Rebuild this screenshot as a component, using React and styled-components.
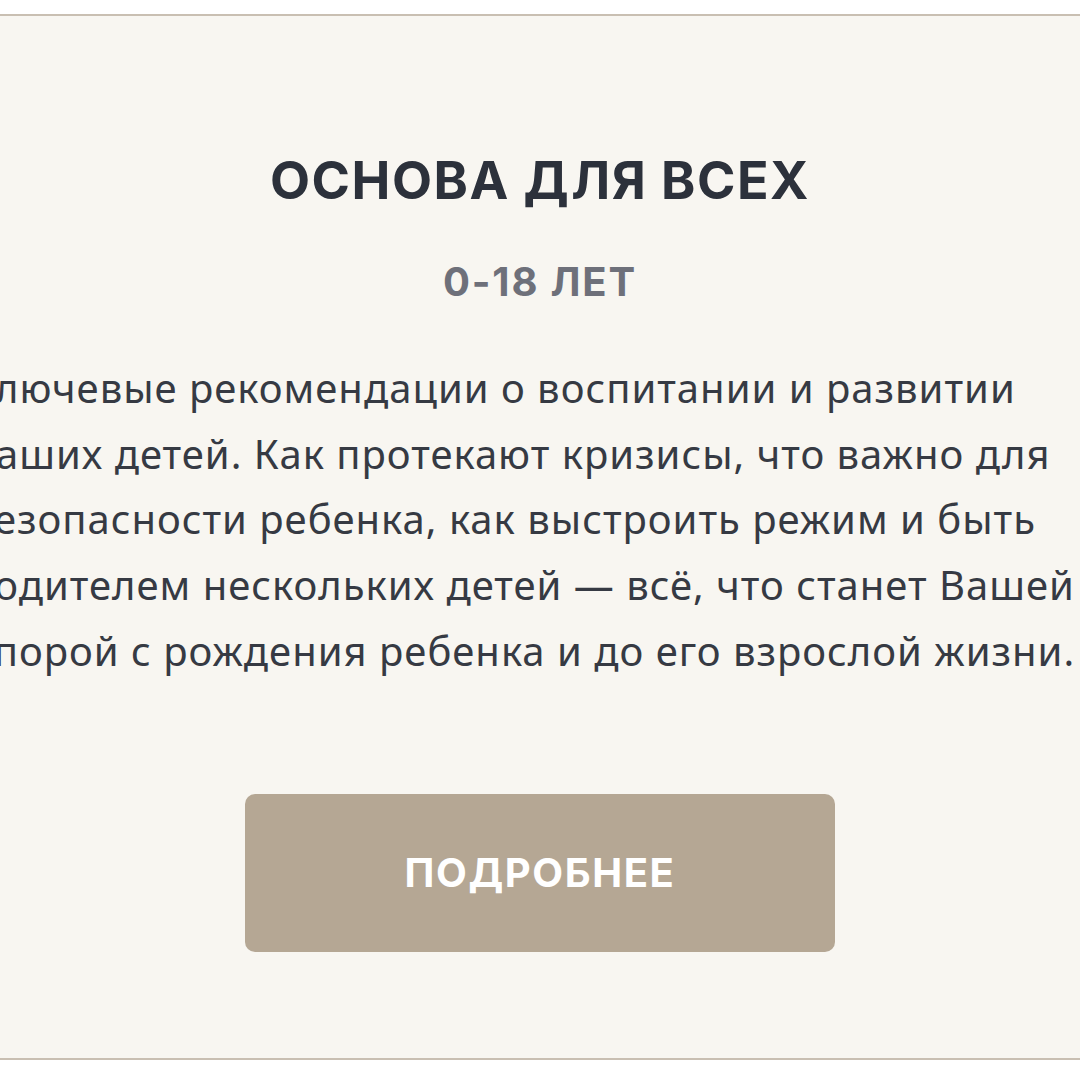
import React from "react";
import styled, { createGlobalStyle } from "styled-components";

const GlobalStyle = createGlobalStyle`
  html, body {
    margin: 0;
    padding: 0;
    background: #ffffff;
  }
  body {
    font-family: "Inter", "Noto Sans", sans-serif;
  }
`;

const lines = [
  "Ключевые рекомендации о воспитании и развитии",
  "Ваших детей. Как протекают кризисы, что важно для",
  "безопасности ребенка, как выстроить режим и быть",
  "родителем нескольких детей — всё, что станет Вашей",
  "опорой с рождения ребенка и до его взрослой жизни."
];

const App = () => {
  return (
    <>
      <GlobalStyle />
      <Page>
        <Card>
          <Title>Основа для всех</Title>
          <Age>0-18 лет</Age>
          <Text>
            {lines.map((line, idx) => (
              <Line key={idx}>{line}</Line>
            ))}
          </Text>
          <Button>Подробнее</Button>
        </Card>
      </Page>
    </>
  );
};

export default App;

const Page = styled.div`
  width: 1080px;
  height: 1080px;
  padding-top: 14px;
  box-sizing: border-box;
  overflow: hidden;
`;

const Card = styled.section`
  height: 1046px;
  box-sizing: border-box;
  background: #f8f6f1;
  border-top: 2px solid #c9bfb2;
  border-bottom: 2px solid #c9bfb2;
  display: flex;
  flex-direction: column;
  align-items: center;
  padding-top: 134px;
  overflow: hidden;
`;

const Title = styled.h2`
  margin: 0;
  font-family: "Inter", sans-serif;
  font-weight: 700;
  font-size: 52px;
  line-height: 62px;
  letter-spacing: 1.5px;
  text-transform: uppercase;
  color: #2c313b;
`;

const Age = styled.div`
  margin-top: 47px;
  font-family: "Inter", sans-serif;
  font-weight: 700;
  font-size: 40px;
  line-height: 46px;
  letter-spacing: 1.8px;
  text-transform: uppercase;
  color: #6e707a;
`;

const Text = styled.div`
  align-self: flex-start;
  margin: 50px 0 0 -31px;
  font-family: "Noto Sans", sans-serif;
  font-weight: 400;
  font-size: 40px;
  line-height: 65.7px;
  letter-spacing: 1px;
  color: #363a43;
`;

const Line = styled.div`
  white-space: nowrap;
`;

const Button = styled.div`
  margin-top: 110px;
  width: 590px;
  height: 158px;
  border-radius: 10px;
  background: #b5a794;
  display: flex;
  align-items: center;
  justify-content: center;
  font-family: "Inter", sans-serif;
  font-weight: 700;
  font-size: 40px;
  letter-spacing: 1.6px;
  text-transform: uppercase;
  color: #ffffff;
`;
